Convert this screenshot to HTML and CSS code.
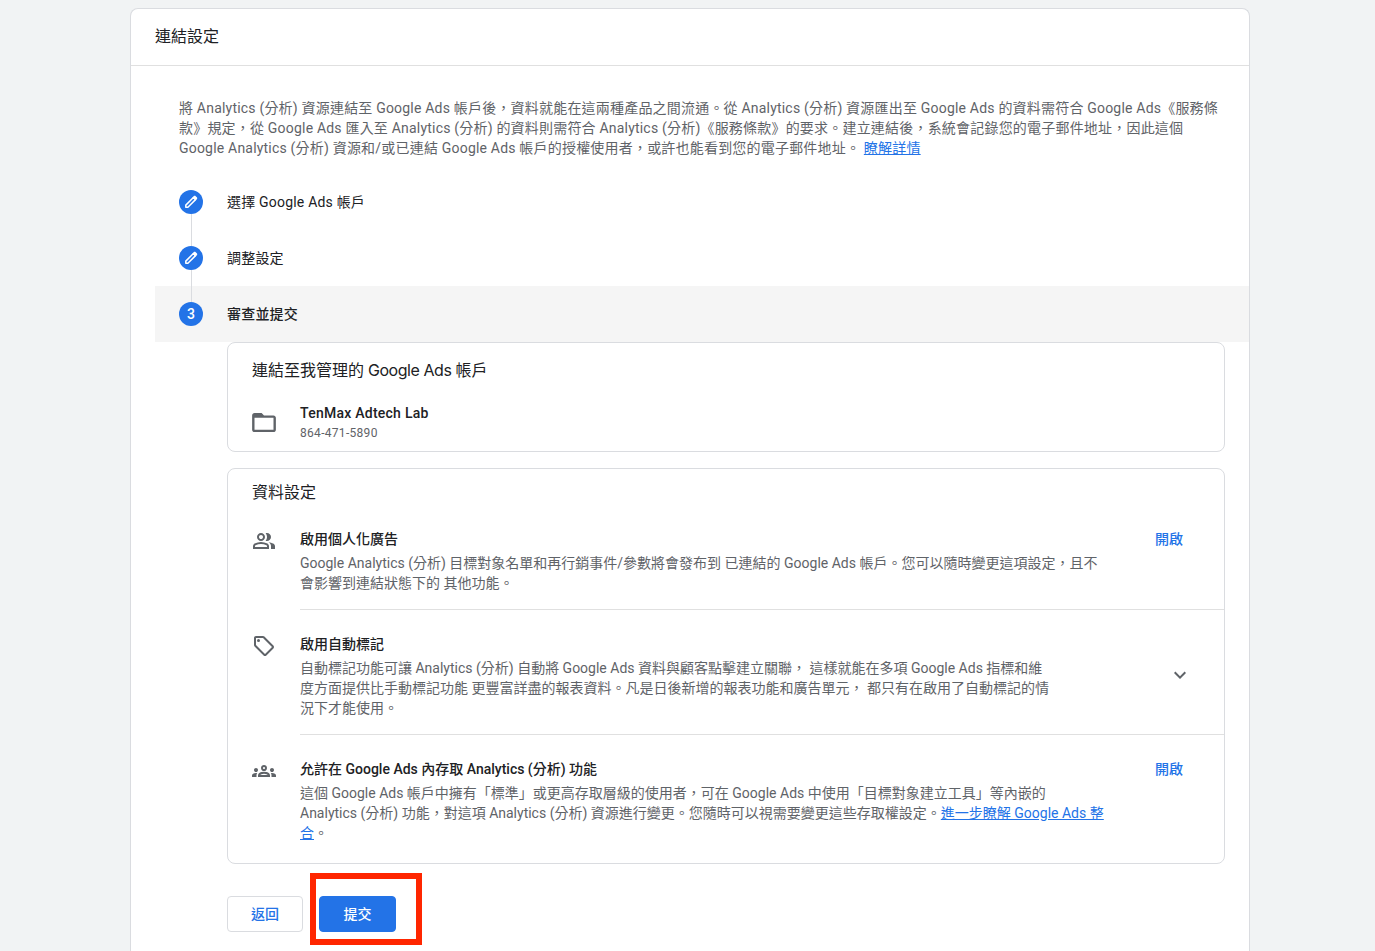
FILE: index.html
```html
<!DOCTYPE html>
<html lang="zh-Hant">
<head>
<meta charset="utf-8">
<meta name="viewport" content="width=device-width,initial-scale=1">
<title>連結設定</title>
<link rel="stylesheet" href="styles.css">
</head>
<body>

<main class="card">
  <header class="card-head"><h1>連結設定</h1></header>

  <!-- INTRO -->
  <p class="intro">將 Analytics (分析) 資源連結至 Google Ads 帳戶後，資料就能在這兩種產品之間流通。從 Analytics (分析) 資源匯出至 Google Ads 的資料需符合 Google Ads《服務條<br>款》規定，從 Google Ads 匯入至 Analytics (分析) 的資料則需符合 Analytics (分析)《服務條款》的要求。建立連結後，系統會記錄您的電子郵件地址，因此這個<br>Google Analytics (分析) 資源和/或已連結 Google Ads 帳戶的授權使用者，或許也能看到您的電子郵件地址。 <a href="#">瞭解詳情</a></p>

  <!-- STEPS -->
  <ol class="steps">
    <li class="step">
      <span class="dot"><svg viewBox="0 0 16 16" width="16" height="16"><path class="pen" d="M2.8 13.2v-2.1l7.6-7.6 2.1 2.1-7.6 7.6z"/><path d="M9.4 3.5l1.3-1.3c.6-.6 1.4-.6 2 0l1.1 1.1c.6.6.6 1.4 0 2l-1.3 1.3z"/></svg></span>
      <span>選擇 Google Ads 帳戶</span>
    </li>
    <li class="step">
      <span class="dot"><svg viewBox="0 0 16 16" width="16" height="16"><path class="pen" d="M2.8 13.2v-2.1l7.6-7.6 2.1 2.1-7.6 7.6z"/><path d="M9.4 3.5l1.3-1.3c.6-.6 1.4-.6 2 0l1.1 1.1c.6.6.6 1.4 0 2l-1.3 1.3z"/></svg></span>
      <span>調整設定</span>
    </li>
    <li class="step active">
      <span class="dot">3</span>
      <span>審查並提交</span>
    </li>
  </ol>

  <div class="content">
    <!-- ACCOUNT -->
    <section class="panel account">
      <h2>連結至我管理的 <span class="brand">Google Ads</span> 帳戶</h2>
      <div class="account-row">
        <svg class="folder" viewBox="2 4 20 16" width="24" height="19"><path d="M20 6h-8l-2-2H4c-1.1 0-2 .9-2 2v12c0 1.1.9 2 2 2h16c1.1 0 2-.9 2-2V8c0-1.1-.9-2-2-2zm0 12H4V8h16v10z"/></svg>
        <div>
          <div class="account-name">TenMax Adtech Lab</div>
          <div class="account-id">864-471-5890</div>
        </div>
      </div>
    </section>

    <!-- DATA SETTINGS -->
    <section class="panel">
      <h2>資料設定</h2>

      <div class="row">
        <svg class="icon" viewBox="0 -960 960 960" width="24" height="24"><path d="M40-160v-112q0-34 17.5-62.5T104-378q62-31 126-46.5T360-440q66 0 130 15.5T616-378q29 15 46.5 43.5T680-272v112H40Zm720 0v-120q0-44-24.5-84.5T666-434q51 6 96 20.5t84 35.5q36 20 55 44.5t19 53.5v120H760ZM360-480q-66 0-113-47t-47-113q0-66 47-113t113-47q66 0 113 47t47 113q0 66-47 113t-113 47Zm400-160q0 66-47 113t-113 47q-11 0-28-2.5t-28-5.5q27-32 41.5-71t14.5-81q0-42-14.5-81T544-792q14-5 28-6.5t28-1.5q66 0 113 47t47 113ZM120-240h480v-32q0-11-5.5-20T580-306q-54-27-109-40.5T360-360q-56 0-111 13.5T140-306q-9 5-14.5 14t-5.5 20v32Zm240-320q33 0 56.5-23.5T440-640q0-33-23.5-56.5T360-720q-33 0-56.5 23.5T280-640q0 33 23.5 56.5T360-560Z"/></svg>
        <div class="row-body">
          <div class="row-text">
            <h3>啟用個人化廣告</h3>
            <p>Google Analytics (分析) 目標對象名單和再行銷事件/參數將會發布到 已連結的 Google Ads 帳戶。您可以隨時變更這項設定，且不<br>會影響到連結狀態下的 其他功能。</p>
          </div>
          <span class="status">開啟</span>
        </div>
      </div>

      <div class="row">
        <svg class="icon" viewBox="0 0 24 24" width="24" height="24"><path d="M21.41 11.58l-9-9C12.05 2.22 11.55 2 11 2H4c-1.1 0-2 .9-2 2v7c0 .55.22 1.05.59 1.42l9 9c.36.36.86.58 1.41.58s1.05-.22 1.41-.59l7-7c.37-.36.59-.86.59-1.41s-.23-1.06-.59-1.42zM13 20.01L4 11V4h7v-.01l9 9-7 7.02z"/><circle cx="6.5" cy="6.5" r="1.5"/></svg>
        <div class="row-body">
          <div class="row-text">
            <h3>啟用自動標記</h3>
            <p>自動標記功能可讓 Analytics (分析) 自動將 Google Ads 資料與顧客點擊建立關聯， 這樣就能在多項 Google Ads 指標和維<br>度方面提供比手動標記功能 更豐富詳盡的報表資料。凡是日後新增的報表功能和廣告單元， 都只有在啟用了自動標記的情<br>況下才能使用。</p>
          </div>
          <svg class="chevron" viewBox="0 0 24 24" width="24" height="24"><path d="M16.59 8.59L12 13.17 7.41 8.59 6 10l6 6 6-6z"/></svg>
        </div>
      </div>

      <div class="row">
        <svg class="icon" viewBox="0 -960 960 960" width="24" height="24"><path d="M0-240v-63q0-43 44-70t116-27q13 0 25 .5t23 2.5q-14 21-21 44t-7 48v65H0Zm240 0v-65q0-32 17.5-58.5T307-410q32-20 76.5-30t96.5-10q53 0 97.5 10t76.5 30q32 20 49 46.5t17 58.5v65H240Zm540 0v-65q0-26-6.5-49T754-397q11-2 22.5-2.5t23.5-.5q72 0 116 26.5t44 70.5v63H780Zm-455-80h311q-10-20-55.5-35T480-370q-55 0-100.5 15T325-320ZM160-440q-33 0-56.5-23.5T80-520q0-34 23.5-57t56.5-23q34 0 57 23t23 57q0 33-23 56.5T160-440Zm640 0q-33 0-56.5-23.5T720-520q0-34 23.5-57t56.5-23q34 0 57 23t23 57q0 33-23 56.5T800-440Zm-320-40q-50 0-85-35t-35-85q0-51 35-85.5t85-34.5q51 0 85.5 34.5T600-600q0 50-34.5 85T480-480Zm0-80q17 0 28.5-11.5T520-600q0-17-11.5-28.5T480-640q-17 0-28.5 11.5T440-600q0 17 11.5 28.5T480-560Z"/></svg>
        <div class="row-body">
          <div class="row-text">
            <h3>允許在 Google Ads 內存取 Analytics (分析) 功能</h3>
            <p>這個 Google Ads 帳戶中擁有「標準」或更高存取層級的使用者，可在 Google Ads 中使用「目標對象建立工具」等內嵌的<br>Analytics (分析) 功能，對這項 Analytics (分析) 資源進行變更。您隨時可以視需要變更這些存取權設定。<a href="#">進一步瞭解 Google Ads 整<br>合</a>。</p>
          </div>
          <span class="status">開啟</span>
        </div>
      </div>
    </section>

    <!-- ACTIONS -->
    <div class="actions">
      <button class="btn">返回</button>
      <div class="submit-wrap"><button class="btn primary">提交</button></div>
    </div>
  </div>
</main>

</body>
</html>
```
FILE: styles.css
```css
:root{
  --blue:#2373e7;
  --text:#202124;
  --muted:#5f6368;
  --line:#dadce0;
}
*{box-sizing:border-box;margin:0;padding:0}
html{height:100%}
body{
  background:#f1f3f4;color:var(--text);
  font:14px/20px Roboto,"Noto Sans CJK TC",sans-serif;
  height:100%;padding-top:8px;text-spacing-trim:space-all;
}
a{color:var(--blue)}
svg{fill:var(--muted);flex:none}

/* ---------- CARD ---------- */
.card{
  width:1120px;height:100%;margin-left:130px;
  background:#fff;border:1px solid var(--line);border-bottom:0;border-radius:8px 8px 0 0;
}
.card-head{height:57px;padding:16px 24px 0;border-bottom:1px solid #e0e0e0}
h1,h2{font-size:16px;line-height:24px;font-weight:400}
.intro{
  margin:32px 0 16px 48px;color:var(--muted);
  letter-spacing:.2px;white-space:nowrap;
}

/* ---------- STEPS ---------- */
.steps{list-style:none;margin-left:24px}
.step{
  position:relative;display:flex;align-items:center;gap:24px;
  height:56px;padding-left:24px;letter-spacing:.2px;
}
.step+.step:before{
  content:"";position:absolute;left:36px;top:-16px;height:32px;
  border-left:1px solid var(--line);
}
.step.active{background:#f5f5f5;font-weight:500}
.dot{
  display:flex;align-items:center;justify-content:center;
  width:24px;height:24px;border-radius:50%;
  background:var(--blue);color:#fff;font-weight:500;
}
.dot svg{fill:#fff}
.dot .pen{fill:none;stroke:#fff;stroke-width:1.5;stroke-linejoin:round}

/* ---------- PANELS ---------- */
.content{padding:0 24px 0 96px}
.panel{border:1px solid var(--line);border-radius:8px;padding:12px 0 4px 24px;margin-bottom:9px}
.account{height:110px;padding-top:15px;margin-bottom:16px}
.brand{font-family:Inter,sans-serif;letter-spacing:-.45px}
.account-row{display:flex;gap:24px;margin-top:20px}
.folder{margin-top:10px}
.account-name{font-weight:500;letter-spacing:.25px}
.account-id{font-size:12px;color:var(--muted);letter-spacing:.3px}

.row{display:flex;gap:24px}
.row .icon{margin-top:24px}
.row-body{
  flex:1;display:flex;justify-content:space-between;
  padding:24px 40px 16px 0;border-bottom:1px solid #e0e0e0;
}
.row:last-child .row-body{border-bottom:0}
h3{font-size:14px;line-height:20px;font-weight:500;margin-bottom:4px}
.row p{color:var(--muted);white-space:nowrap}
.status{color:var(--blue);font-weight:500;margin-right:1px}
.chevron{align-self:center;margin:-2px -8px 0 0}

/* ---------- ACTIONS ---------- */
.actions{display:flex;align-items:flex-start;gap:7px}
.btn{
  width:76px;height:36px;border:1px solid var(--line);border-radius:4px;
  background:#fff;color:var(--blue);font:500 14px/20px Roboto,"Noto Sans CJK TC",sans-serif;
}
.actions>.btn{margin-top:23px}
.submit-wrap{width:112px;height:72px;border:6px solid #ff2600;padding:17px 3px}
.primary{width:77px;background:var(--blue);border-color:var(--blue);color:#fff}
```
